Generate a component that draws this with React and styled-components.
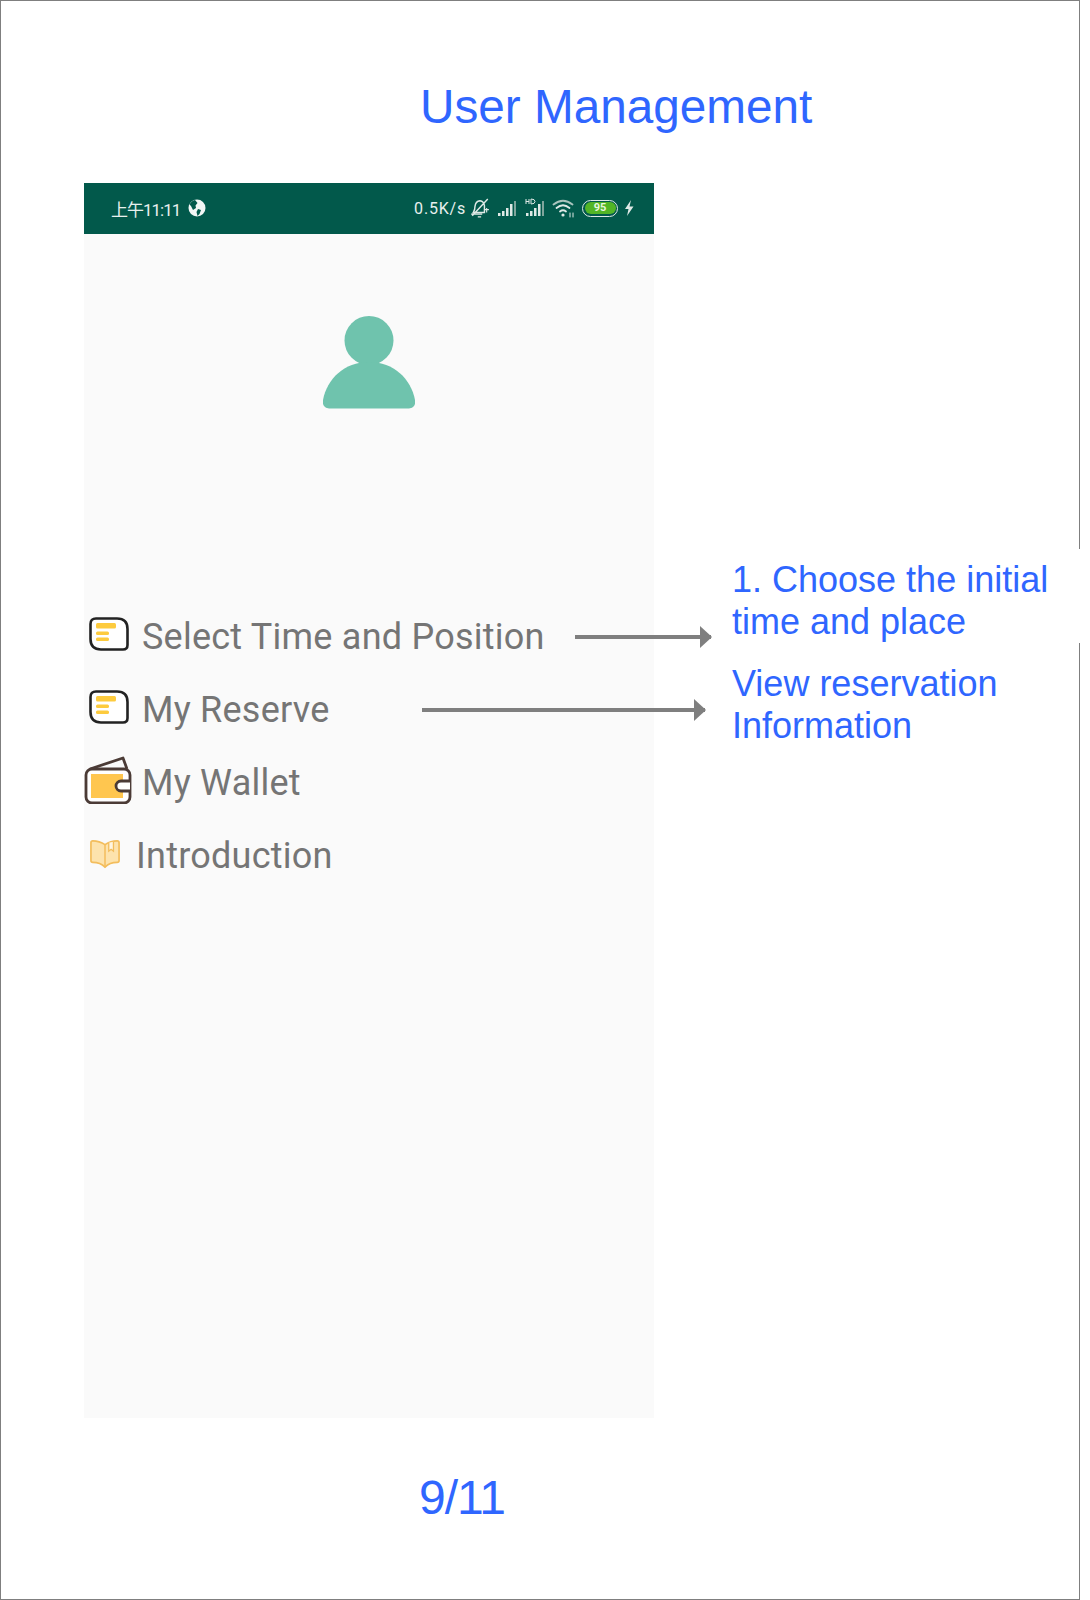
import React from 'react';
import styled, { createGlobalStyle } from 'styled-components';

const Global = createGlobalStyle`
  html, body { margin: 0; padding: 0; background: #fff; }
`;

const Frame = styled.div`
  box-sizing: border-box;
  width: 1080px;
  height: 1600px;
  border: 1px solid #7f7f7f;
  background: #fff;
  font-family: "Liberation Sans", Arial, sans-serif;
  color: #2f66ff;
`;

const Title = styled.h1`
  margin: 0;
  height: 182px;
  padding: 79px 0 0 419px;
  box-sizing: border-box;
  font-size: 47.7px;
  line-height: 54px;
  font-weight: 400;
`;

const Body = styled.div`
  display: flex;
  align-items: flex-start;
`;

const Phone = styled.div`
  width: 570px;
  height: 1235px;
  margin-left: 83px;
  background: #fafafa;
  flex: none;
`;

const StatusBar = styled.div`
  height: 50px;
  padding: 0 20px 1px 27px;
  background: #02594b;
  color: #e8f0ee;
  display: flex;
  align-items: center;
  justify-content: space-between;
  font-family: Roboto, "Noto Sans CJK SC", sans-serif;
`;

const StatusGroup = styled.div`
  display: flex;
  align-items: center;
  gap: ${p => p.$gap || 8}px;
`;

const Clock = styled.span`
  font-size: 17px;
  letter-spacing: -1px;
`;

const Speed = styled.span`
  font-size: 16px;
  letter-spacing: 0.8px;
  margin-right: -2px;
`;

const Battery = styled.span`
  box-sizing: border-box;
  width: 36px;
  height: 17px;
  border: 1.5px solid #dfe9e6;
  border-radius: 9px;
  padding: 1.5px;
  display: flex;
`;

const BatteryFill = styled.span`
  flex: 1;
  border-radius: 6px;
  background: #52b526;
  color: #e8f5df;
  font-size: 11px;
  line-height: 11px;
  font-weight: 700;
  text-align: center;
`;

const AvatarWrap = styled.div`
  display: flex;
  justify-content: center;
  padding-top: 82px;
  height: 284px;
  box-sizing: content-box;
`;

const Menu = styled.div`
  display: flex;
  flex-direction: column;
`;

const Row = styled.div`
  position: relative;
  height: 73px;
  display: flex;
  align-items: center;
  padding-left: ${p => p.$pad}px;
`;

const IconSlot = styled.span`
  width: ${p => p.$width}px;
  margin-bottom: ${p => p.$lift * 2}px;
  display: flex;
  flex: none;
`;

const Label = styled.span`
  font-family: Roboto, sans-serif;
  font-size: 36px;
  color: #757575;
  letter-spacing: 0.24px;
`;

const Arrow = styled.span`
  position: absolute;
  left: ${p => p.$left}px;
  width: ${p => p.$width}px;
  top: 35px;
  height: 4px;
  background: #7f7f7f;
  &::after {
    content: "";
    position: absolute;
    right: -1px;
    top: -9px;
    border-left: 12px solid #7f7f7f;
    border-top: 11px solid transparent;
    border-bottom: 11px solid transparent;
  }
`;

const Notes = styled.div`
  margin: 376px 0 0 78px;
  width: 355px;
  flex: none;
  display: flex;
  flex-direction: column;
  gap: 20px;
`;

const Note = styled.div`
  font-size: 36px;
  line-height: 42px;
`;

// the first note sits on a white box that hides a piece of the frame line
const CoveredNote = styled(Note)`
  background: #fff;
  margin-top: -10px;
  padding-top: 10px;
`;

const PageNumber = styled.div`
  padding: 53px 0 0 418px;
  font-size: 48px;
  line-height: 54px;
  letter-spacing: -1px;
`;

const NoteIcon = () => (
  <svg width="40" height="34" viewBox="0 0 40 34">
    <path d="M7 1.5H28Q38.5 1.5 38.500 12V28Q38.500 32.5 34 32.5H12Q1.5 32.5 1.5 22V7Q1.5 1.5 7 1.5Z" fill="#fff" stroke="#222" strokeWidth="2.6" />
    <rect x="7" y="6" width="20" height="5.500" rx="1.500" fill="#fdcb3e" />
    <rect x="7" y="14.500" width="13" height="3.600" rx="1.500" fill="#fdcb3e" />
    <rect x="7" y="20.500" width="13" height="3.400" rx="1.500" fill="#fdcb3e" />
  </svg>
);

const WalletIcon = () => (
  <svg width="48" height="48" viewBox="0 0 48 48">
    <path d="M6 13L39 2L43 13" fill="none" stroke="#4b3b36" strokeWidth="2.8" strokeLinejoin="round" />
    <rect x="2" y="13" width="44" height="34" rx="6" fill="#fff" stroke="#4b3b36" strokeWidth="2.8" />
    <rect x="7" y="18" width="32" height="24" fill="#ffc64f" />
    <path d="M46 25H37A5 5 0 0 0 37 35H46" fill="#fff" stroke="#4b3b36" strokeWidth="2.8" />
  </svg>
);

const BookIcon = () => (
  <svg width="30" height="30" viewBox="0 0 32 30">
    <path d="M16 5Q10 1 3 1Q1 1 1 3V22Q1 24 3 24Q11 24 16 29Q21 24 29 24Q31 24 31 22V3Q31 1 29 1Q22 1 16 5Z" fill="#fde3ad" stroke="#f3bd5c" strokeWidth="1.8" />
    <path d="M16 5V29" stroke="#f3bd5c" strokeWidth="1.6" />
    <path d="M20 3V12L22.500 10L25 12V2" fill="#fff6e2" stroke="#f3bd5c" strokeWidth="1.4" />
  </svg>
);

const Avatar = () => (
  <svg width="94" height="94" viewBox="0 0 94 94">
    <circle cx="47" cy="24.500" r="24.500" fill="#6fc3ad" />
    <path d="M47 46C22 46 5 63 1 84Q0 92 7 92.500H87Q94 92 93 84C89 63 72 46 47 46Z" fill="#6fc3ad" />
  </svg>
);

const GlobeIcon = () => (
  <svg width="18" height="18" viewBox="0 0 18 18">
    <circle cx="9" cy="9" r="8.500" fill="#f2f6f5" />
    <path d="M7 1L9.500 4L7.500 6.500L8 9L5 11L3 7L1.500 5.500Q3.500 1.500 7 1ZM10 10L13 11L11.500 15L9.500 17L8.500 13Z" fill="#02594b" />
  </svg>
);

const MutedBell = () => (
  <svg width="20" height="20" viewBox="2 1 18 18" fill="none" stroke="#dfe9e6" strokeWidth="1.3">
    <path d="M5 14Q6.500 12 6.500 8.500Q7 4 11 3.500Q14.500 4 15 8V14ZM3 15.500H13M9 18H12M4 17L18 2" />
    <path d="M15.500 11.500H19M17 10V14" strokeWidth="1" />
  </svg>
);

const Signal = ({ hd }) => (
  <svg width="22" height="20" viewBox="0 0 20 20" fill="#dfe9e6">
    <rect x="1" y="15" width="2.500" height="3" />
    <rect x="5" y="13" width="2.500" height="5" />
    <rect x="9" y="10" width="2.500" height="8" />
    <rect x="13" y="6" width="2.500" height="12" />
    <rect x="17" y="3" width="2" height="15" fill="#7fa59c" />
    {hd && <path d="M1 1V6M1 3.500H4M4 1V6M6 1V6Q10 6 10 3.500Q10 1 6 1Z" fill="none" stroke="#dfe9e6" strokeWidth="1" />}
  </svg>
);

const Wifi = () => (
  <svg width="24" height="20" viewBox="0 0 24 20" fill="none" stroke="#dfe9e6" strokeLinecap="round">
    <path d="M1.500 6.500Q11 -1 20.500 6.500" strokeWidth="1.800" stroke="#a9c4bd" />
    <path d="M4.500 10Q11 4.500 17.500 10" strokeWidth="1.800" />
    <path d="M8 13.500Q11 11 14 13.500" strokeWidth="1.800" />
    <circle cx="11" cy="17" r="1.600" fill="#dfe9e6" stroke="none" />
    <path d="M18 15V19M21 15V19" strokeWidth="1" />
  </svg>
);

const Bolt = () => (
  <svg width="10" height="16" viewBox="0 0 10 16" fill="#dfe9e6">
    <path d="M7 0L1 9H4.500L3 16L9.500 6.500H5.500Z" />
  </svg>
);

const menu = [
  { name: 'Select Time and Position', pad: 5, slot: 53, lift: 3, icon: <NoteIcon />, arrow: { left: 491, width: 136 } },
  { name: 'My Reserve', pad: 5, slot: 53, lift: 3, icon: <NoteIcon />, arrow: { left: 338, width: 283 } },
  { name: 'My Wallet', pad: 0, slot: 58, lift: 3, icon: <WalletIcon /> },
  { name: 'Introduction', pad: 6, slot: 46, lift: 2, icon: <BookIcon /> },
];

export default function App() {
  return (
    <Frame>
      <Global />
      <Title>User Management</Title>
      <Body>
        <Phone>
          <StatusBar>
            <StatusGroup $gap={8}>
              <Clock>上午11:11</Clock>
              <GlobeIcon />
            </StatusGroup>
            <StatusGroup $gap={6}>
              <Speed>0.5K/s</Speed>
              <MutedBell />
              <Signal />
              <Signal hd />
              <Wifi />
              <Battery><BatteryFill>95</BatteryFill></Battery>
              <Bolt />
            </StatusGroup>
          </StatusBar>
          <AvatarWrap><Avatar /></AvatarWrap>
          <Menu>
            {menu.map(item => (
              <Row key={item.name} $pad={item.pad}>
                <IconSlot $width={item.slot} $lift={item.lift}>{item.icon}</IconSlot>
                <Label>{item.name}</Label>
                {item.arrow && <Arrow $left={item.arrow.left} $width={item.arrow.width} />}
              </Row>
            ))}
          </Menu>
        </Phone>
        <Notes>
          <CoveredNote>1. Choose the initial<br />time and place</CoveredNote>
          <Note>View reservation<br />Information</Note>
        </Notes>
      </Body>
      <PageNumber>9/11</PageNumber>
    </Frame>
  );
}
